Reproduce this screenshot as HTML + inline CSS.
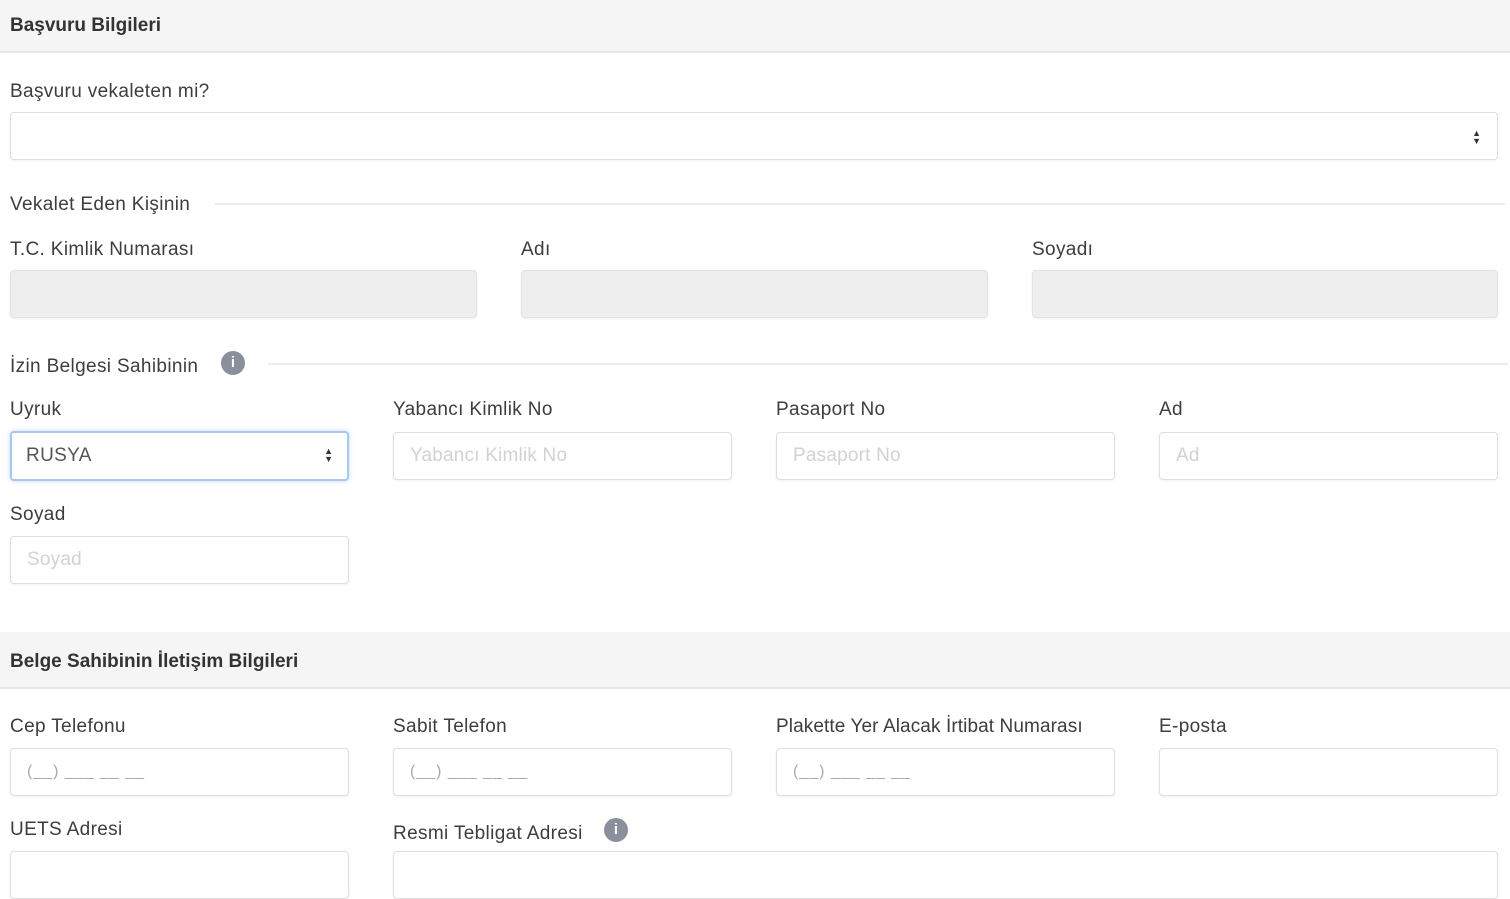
<!DOCTYPE html><html><head><meta charset="utf-8"><style>
body{margin:0;width:1510px;height:860px;overflow:hidden;background:#fff;font-family:"Liberation Sans",sans-serif;color:#3d3d3d;position:relative}
.a{position:absolute}
.t{font-size:19px;letter-spacing:0.35px;line-height:22px;margin-top:2px}
.b{font-weight:bold;color:#333;letter-spacing:0}
.in{position:absolute;height:46px;border:1px solid #dedede;border-radius:4px;box-sizing:border-box;background:#fff;box-shadow:0 1px 2px rgba(0,0,0,.06)}
.g{background:#eeeeee;border-color:#e2e2e2}
.ph{position:absolute;left:16px;top:12px;font-size:19px;color:#d2d2d2;letter-spacing:0.2px}
.line{position:absolute;height:2px;background:#ececec}
.info{position:absolute;width:24px;height:24px;border-radius:50%;background:#8a8f9c;color:#fff;font-size:15px;font-weight:bold;text-align:center;line-height:24px}
.arr{position:absolute;right:16px;top:14px;font-size:9px;line-height:8px;color:#333}
.mask{position:absolute;left:16px;top:14px;font-size:16px;color:#aaa;letter-spacing:1px}
</style></head><body>
<div class="a" style="left:0;top:0;width:1510px;height:51px;background:#f5f5f5;border-bottom:2px solid #e8e8e8"></div>
<div class="a t b" style="left:10px;top:13px">Başvuru Bilgileri</div>
<div class="a t" style="left:10px;top:79px">Başvuru vekaleten mi?</div>
<div class="in" style="left:10px;top:112px;width:1488px;height:48px"><div class="arr" style="top:16px">▲<br>▼</div></div>
<div class="a t" style="left:10px;top:192px">Vekalet Eden Kişinin</div>
<div class="line" style="left:215px;top:203px;width:1290px"></div>
<div class="a t" style="left:10px;top:237px">T.C. Kimlik Numarası</div>
<div class="a t" style="left:521px;top:237px">Adı</div>
<div class="a t" style="left:1032px;top:237px">Soyadı</div>
<div class="in g" style="left:10px;top:270px;width:467px;height:48px"></div>
<div class="in g" style="left:521px;top:270px;width:467px;height:48px"></div>
<div class="in g" style="left:1032px;top:270px;width:466px;height:48px"></div>
<div class="a t" style="left:10px;top:354px">İzin Belgesi Sahibinin</div>
<div class="info" style="left:221px;top:351px">i</div>
<div class="line" style="left:268px;top:363px;width:1240px"></div>
<div class="a t" style="left:10px;top:397px">Uyruk</div>
<div class="a t" style="left:393px;top:397px">Yabancı Kimlik No</div>
<div class="a t" style="left:776px;top:397px">Pasaport No</div>
<div class="a t" style="left:1159px;top:397px">Ad</div>
<div class="in" style="left:10px;top:431px;width:339px;height:50px;border:2px solid #a9c8ee;box-shadow:0 0 4px rgba(100,150,230,.4)"><div class="a t" style="left:14px;top:12px;color:#555;margin-top:0">RUSYA</div><div class="arr" style="right:14px">▲<br>▼</div></div>
<div class="in" style="left:393px;top:432px;width:339px;height:48px"><div class="ph">Yabancı Kimlik No</div></div>
<div class="in" style="left:776px;top:432px;width:339px;height:48px"><div class="ph">Pasaport No</div></div>
<div class="in" style="left:1159px;top:432px;width:339px;height:48px"><div class="ph">Ad</div></div>
<div class="a t" style="left:10px;top:502px">Soyad</div>
<div class="in" style="left:10px;top:536px;width:339px;height:48px"><div class="ph">Soyad</div></div>
<div class="a" style="left:0;top:632px;width:1510px;height:55px;background:#f5f5f5;border-bottom:2px solid #e8e8e8"></div>
<div class="a t b" style="left:10px;top:649px">Belge Sahibinin İletişim Bilgileri</div>
<div class="a t" style="left:10px;top:714px">Cep Telefonu</div>
<div class="a t" style="left:393px;top:714px">Sabit Telefon</div>
<div class="a t" style="left:776px;top:714px;letter-spacing:0.1px">Plakette Yer Alacak İrtibat Numarası</div>
<div class="a t" style="left:1159px;top:714px">E-posta</div>
<div class="in" style="left:10px;top:748px;width:339px;height:48px"><div class="mask">(__) ___ __ __</div></div>
<div class="in" style="left:393px;top:748px;width:339px;height:48px"><div class="mask">(__) ___ __ __</div></div>
<div class="in" style="left:776px;top:748px;width:339px;height:48px"><div class="mask">(__) ___ __ __</div></div>
<div class="in" style="left:1159px;top:748px;width:339px;height:48px"></div>
<div class="a t" style="left:10px;top:817px">UETS Adresi</div>
<div class="a t" style="left:393px;top:821px">Resmi Tebligat Adresi</div>
<div class="info" style="left:604px;top:818px">i</div>
<div class="in" style="left:10px;top:851px;width:339px;height:48px"></div>
<div class="in" style="left:393px;top:851px;width:1105px;height:48px"></div>
</body></html>
